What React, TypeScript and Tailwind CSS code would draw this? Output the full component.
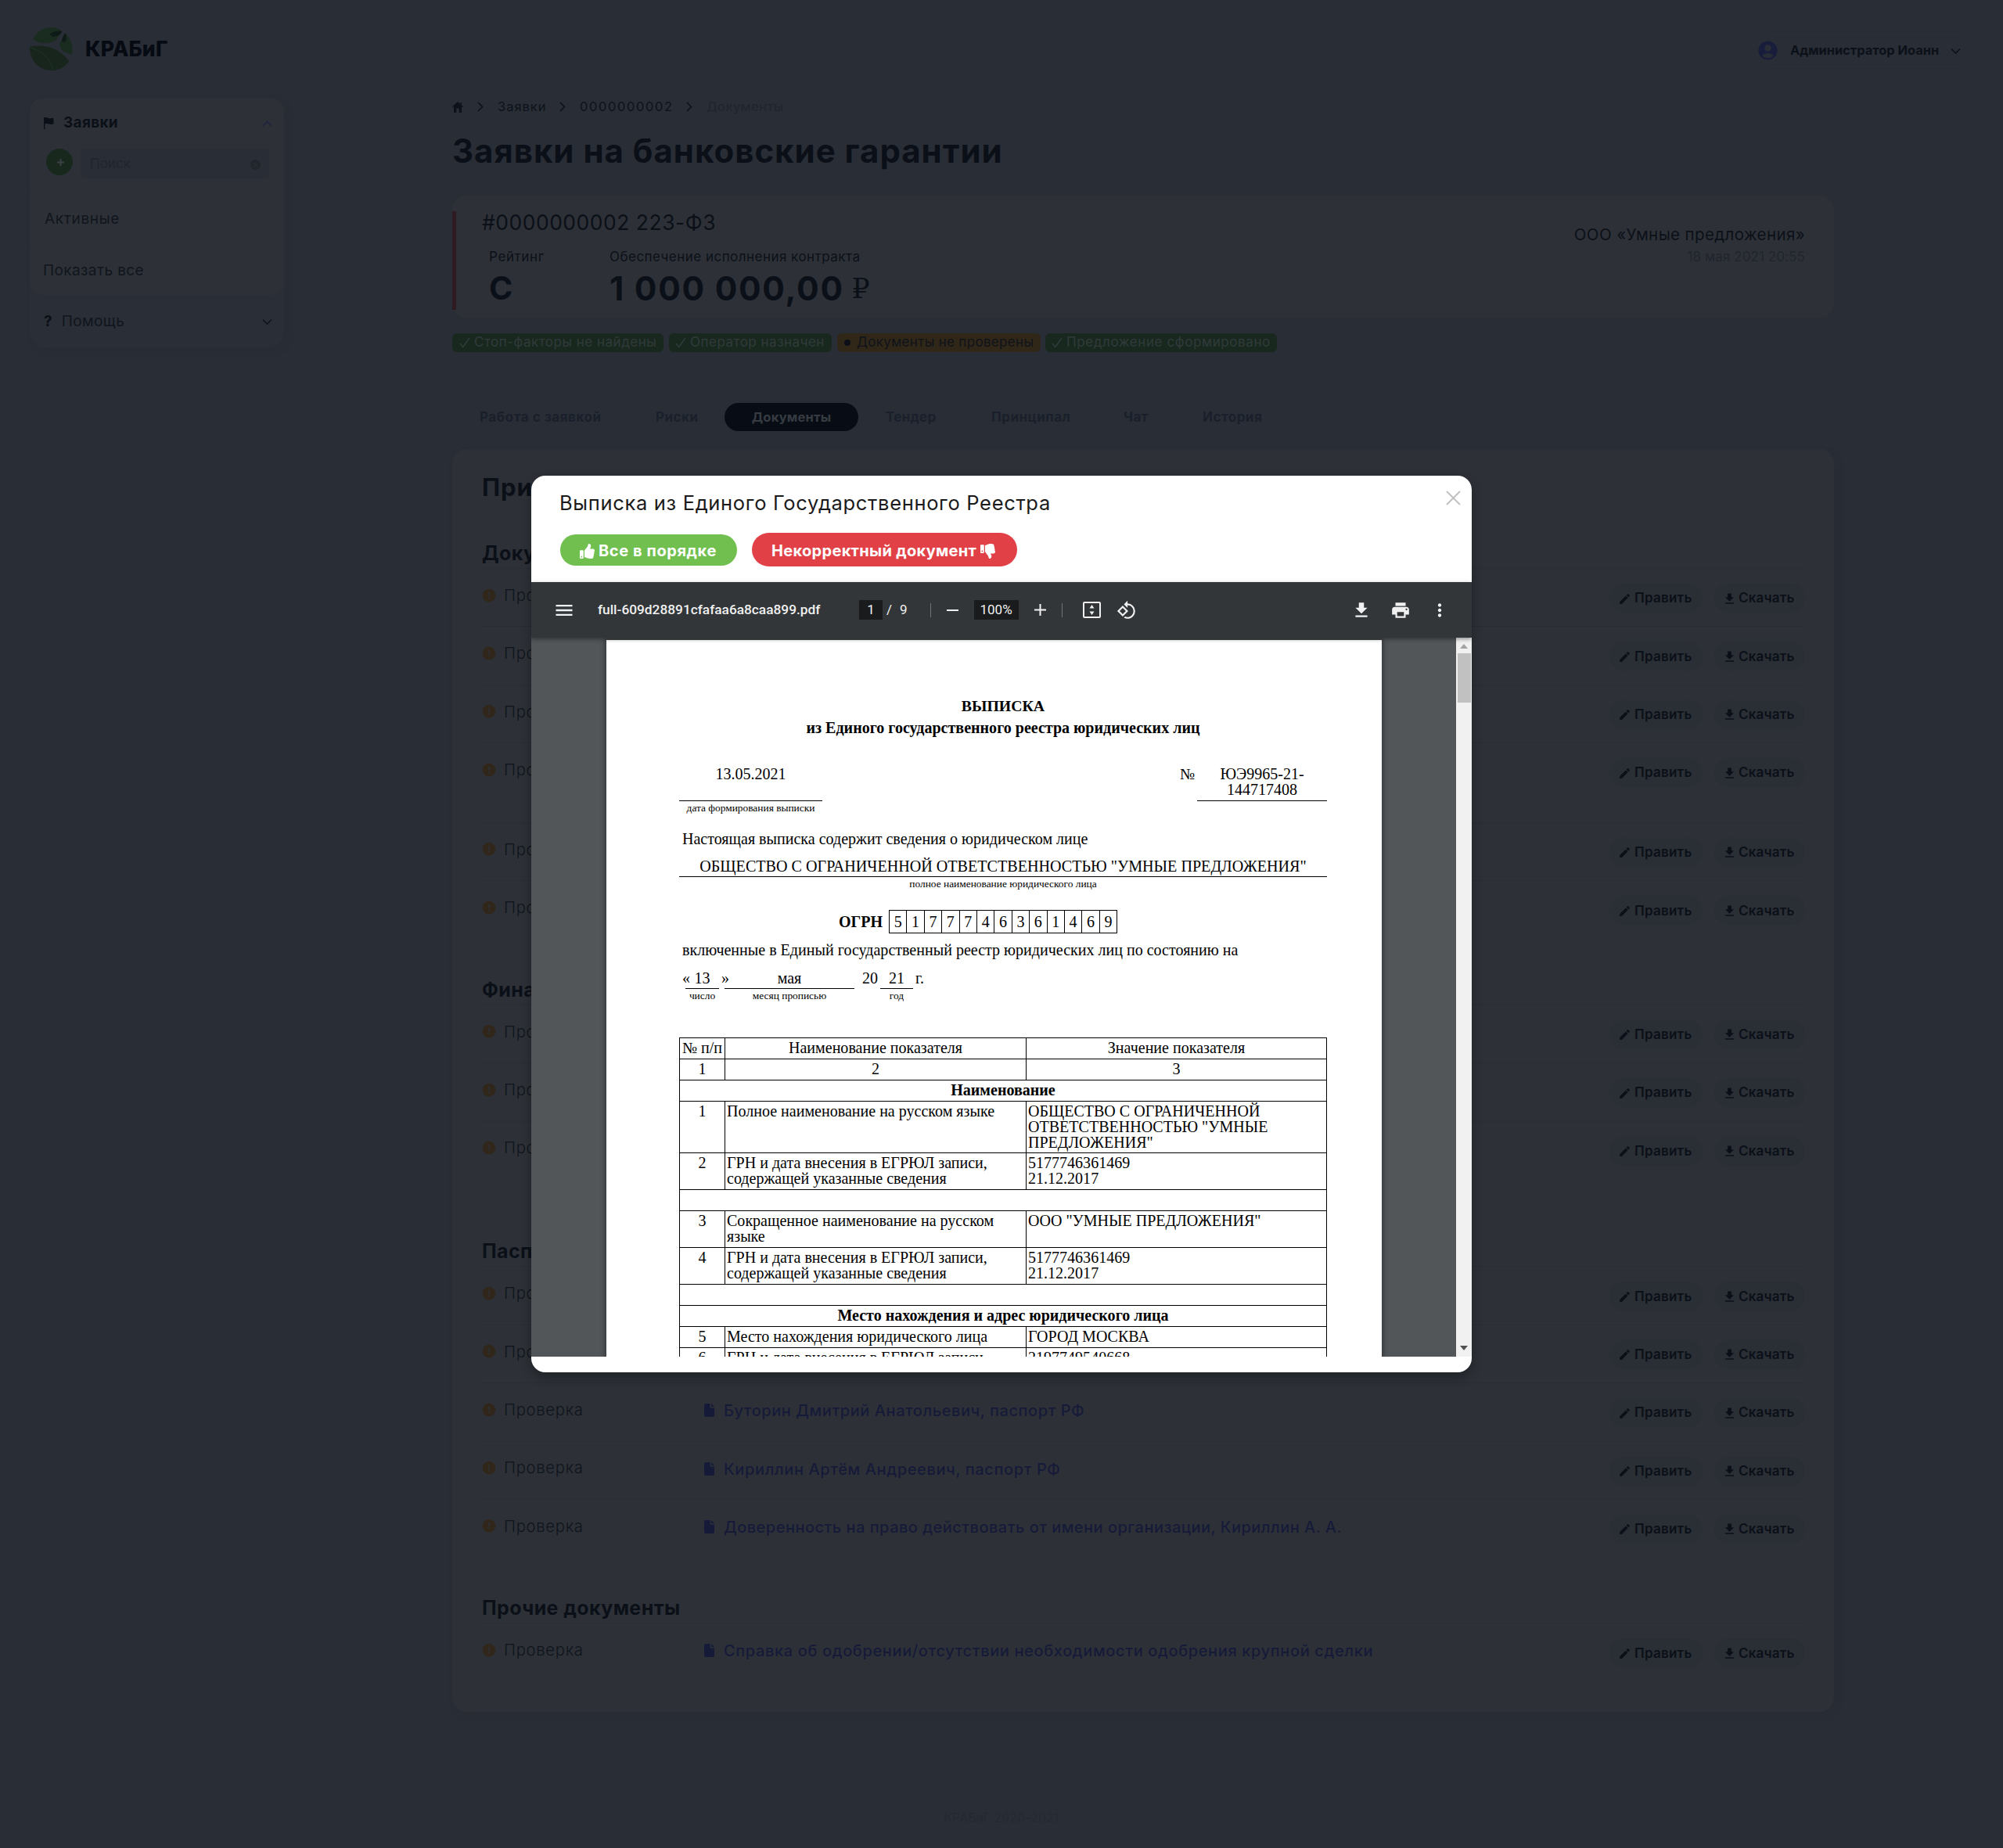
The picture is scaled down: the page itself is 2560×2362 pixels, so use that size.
import type { ReactNode } from 'react';
import { FaThumbsDown, FaThumbsUp } from 'react-icons/fa';
import {
  MdAccountCircle,
  MdError,
  MdFileDownload,
  MdMenu,
  MdModeEdit,
  MdMoreVert,
  MdPrint,
  MdRotate90DegreesCcw,
} from 'react-icons/md';

function Chevron({ dir, className = '' }: { dir: 'up' | 'down' | 'right'; className?: string }) {
  const d = { up: 'M1 8 L6.5 2.5 L12 8', down: 'M1 2.5 L6.5 8 L12 2.5', right: 'M3 1 L8.5 6.5 L3 12' }[dir];
  return (
    <svg
      viewBox={dir === 'right' ? '0 0 12 13' : '0 0 13 10'}
      className={`shrink-0 ${dir === 'right' ? 'h-[13px] w-3' : 'h-[10px] w-[13px]'} ${className}`}
      fill="none"
      stroke="currentColor"
      strokeWidth="1.6"
    >
      <path d={d} />
    </svg>
  );
}

function Logo() {
  return (
    <svg viewBox="0 0 55 55" className="h-[55px] w-[55px]">
      <path d="M4.3 15 C9 5 18 0 27.5 0 C33 0 38 2 41.4 5 L33.5 16.5 C24 22 12 21.5 4.3 15Z" fill="#1a2b20" />
      <path d="M25.5 9 C29 5 35 4.5 41.4 5 C40 9 36 11 30 12Z" fill="#0e1a17" />
      <path d="M45.4 7.3 C52 13 56 22 54.3 34.3 C46 34 36.5 28 38.5 19 C42 17 42 11 45.4 7.3Z" fill="#1a2b20" />
      <path d="M45.4 7.3 C47.5 11 47 16 45 19 L41 18 C41.5 14 43 10 45.4 7.3Z" fill="#0e1a17" />
      <path d="M0 24.5 C20 21 38 26 50.4 43.3 C45 51 37 55 28 55 C12 55 0 43 0 24.5Z" fill="#17251d" />
      <path d="M1 26 C15 30 26 39 30 54" fill="none" stroke="#21382a" strokeWidth="0.8" />
    </svg>
  );
}

function Header() {
  return (
    <header className="flex h-[125px] items-start justify-between pl-[38px] pr-[37px]">
      <div className="mt-[35px] flex h-[55px] items-center gap-[16px]">
        <Logo />
        <span className="text-[26.5px] font-extrabold tracking-[0.2px] text-[#060a12]">КРАБиГ</span>
      </div>
      <div className="mt-[44px] flex h-[42px] w-[284px] items-center rounded-full border border-[#2c3037] pb-[1px] pl-[5px] text-[#0c1119]">
        <MdAccountCircle className="h-[29px] w-[29px] text-[#191d3c]" />
        <span className="ml-[14px] text-[16.4px] font-bold">Администратор Иоанн</span>
        <Chevron dir="down" className="ml-[15px]" />
      </div>
    </header>
  );
}

function Sidebar() {
  return (
    <aside className="h-[319px] w-[325px] shrink-0 rounded-[18px] bg-[#2a2e36] text-[19px] text-[#10151d] shadow-[4px_4px_6px_#282c34]">
      <div className="h-[253px] rounded-[18px] bg-[#2d3137]">
        <div className="flex h-[65px] items-center pl-[18px] pr-[15px] font-bold text-[#0b1018]">
          <svg viewBox="0 0 13 15" className="h-[15px] w-[13px]" fill="currentColor">
            <path d="M0 0h1.4v15H0z M0 0 C3 -.3 4 .2 6 .9 C8.5 1.5 10 .8 12.5 .7V8.3 C10 9.5 7 8.5 5 8.2 C3 8 2 8.2 0 8.5Z" />
          </svg>
          <span className="ml-[12px] tracking-[0.3px]">Заявки</span>
          <Chevron dir="up" className="ml-auto text-[#1f2342]" />
        </div>
        <div className="flex h-[56px] items-start gap-[10px] pl-[21px]">
          <div className="flex h-[34px] w-[34px] items-center justify-center rounded-full bg-[#18281d] text-[#3a4147]">
            <svg viewBox="0 0 9 9" className="ml-[2px] h-[9px] w-[9px]" stroke="currentColor" strokeWidth="2">
              <path d="M4.5 0v9M0 4.5h9" />
            </svg>
          </div>
          <div className="flex h-[38px] w-[241px] items-center justify-between rounded-[5px] bg-[#292d35] pl-[12px] pr-[11px] pt-[2px] text-[17px] text-[#20252d]">
            <span>Поиск</span>
            <svg viewBox="0 0 13 13" className="h-[13px] w-[13px]">
              <circle cx="6.5" cy="6.5" r="6.5" fill="#21262d" />
              <path d="M4 4l5 5M9 4l-5 5" stroke="#2d3137" />
            </svg>
          </div>
        </div>
        <div className="flex h-[67px] items-center border-t border-[#2a2e35] pl-[19px] tracking-[0.66px]">Активные</div>
        <div className="flex h-[65px] items-center border-t border-[#2a2e35] pl-[17px] tracking-[0.39px]">Показать все</div>
      </div>
      <div className="flex h-[66px] items-center pl-[18px] pr-[15px]">
        <span className="text-[19px] font-bold text-[#0b1018]">?</span>
        <span className="ml-[12px] tracking-[0.41px]">Помощь</span>
        <Chevron dir="down" className="ml-auto" />
      </div>
    </aside>
  );
}

function Breadcrumbs() {
  return (
    <nav className="flex h-[24px] items-center pb-[1px] text-[16.5px] text-[#0d121a]">
      <svg viewBox="0 0 14 14" className="h-[14px] w-[14px]" fill="currentColor">
        <path d="M7 0 14 6.3 13.2 7.2 12 6.2V14H8.7V8.500H5.300V14H2V6.200L.8 7.200 0 6.300Z M10.500 1h1.500v3l-1.500-1.300z" />
      </svg>
      <Chevron dir="right" className="ml-[16px]" />
      <span className="ml-[16px] w-[79px] tracking-[0.97px]">Заявки</span>
      <Chevron dir="right" className="-ml-[2px]" />
      <span className="ml-[16px] w-[136px] tracking-[1.6px]">0000000002</span>
      <Chevron dir="right" className="-ml-[2px]" />
      <span className="ml-[16px] tracking-[0.55px] text-[#1f242d]">Документы</span>
    </nav>
  );
}

function RequestCard() {
  return (
    <section className="mt-[14px] flex h-[156px] rounded-[18px] bg-[#2d3137] text-[#0b1018]">
      <div className="mt-[20px] h-[126px] w-[5px] bg-[#2f1a21]" />
      <div className="flex flex-1 flex-col pl-[33px] pt-[19px]">
        <div className="flex h-[32px] items-center text-[26.5px] tracking-[0.5px]">#0000000002 223-ФЗ</div>
        <div className="mt-[16px] flex">
          <div className="w-[154px] pl-[9px]">
            <div className="flex h-[24px] items-center text-[17px] tracking-[0.61px]">Рейтинг</div>
            <div className="mt-[8px] flex h-[40px] items-center text-[41px] font-bold">С</div>
          </div>
          <div className="pl-[9px]">
            <div className="flex h-[24px] items-center text-[17px] tracking-[0.47px]">Обеспечение исполнения контракта</div>
            <div className="mt-[8px] flex h-[40px] items-center text-[42.5px]">
              <span className="font-bold tracking-[1.7px]">1 000 000,00</span>
              <span className="ml-[10px] font-['Liberation_Serif','DejaVu_Serif',serif] text-[36px]">₽</span>
            </div>
          </div>
        </div>
      </div>
      <div className="flex flex-col items-end pr-[37px] pt-[36px]">
        <div className="flex h-[28px] items-center text-[20.5px] tracking-[0.39px]">ООО «Умные предложения»</div>
        <div className="flex h-[29px] items-center text-[17px] tracking-[0.1px] text-[#20252d]">18 мая 2021 20:55</div>
      </div>
    </section>
  );
}

function Check() {
  return (
    <svg viewBox="0 0 14 14" className="mr-[5px] h-[14px] w-[14px]" fill="none" stroke="currentColor" strokeWidth="1.6">
      <path d="M1 8l3.800 4.500L13 1" />
    </svg>
  );
}

function Badges() {
  return (
    <div className="mt-[20px] flex h-[24px] text-[17px] whitespace-nowrap text-[#313a3b]">
      <div className="flex w-[270px] items-center rounded-[6px] bg-[#18281e] pl-[9px] tracking-[0.5px]">
        <Check />
        Стоп-факторы не найдены
      </div>
      <div className="ml-[7px] flex w-[208px] items-center rounded-[6px] bg-[#18281e] pl-[8px] tracking-[0.5px]">
        <Check />
        Оператор назначен
      </div>
      <div className="ml-[7px] flex w-[260px] items-center rounded-[6px] bg-[#302719] pl-[9px] tracking-[0.32px] text-[#0f1319]">
        <span className="mr-[8px] h-[8px] w-[8px] rounded-full bg-[#0b1018]" />
        Документы не проверены
      </div>
      <div className="ml-[6px] flex w-[296px] items-center rounded-[6px] bg-[#18281e] pl-[8px] tracking-[0.6px]">
        <Check />
        Предложение сформировано
      </div>
    </div>
  );
}

function Tabs() {
  return (
    <div className="mt-[65px] flex h-[36px] items-center text-[17px] font-bold whitespace-nowrap text-[#1a202b]">
      <span className="w-[260px] pl-[35px] pt-[1px] tracking-[0.56px]">Работа с заявкой</span>
      <span className="w-[88px] pt-[1px] tracking-[0.5px]">Риски</span>
      <span className="flex h-[36px] w-[171px] items-center justify-center rounded-full bg-[#080d15] pt-[1px] text-[16.6px] tracking-[0.15px] text-[#353b41]">
        Документы
      </span>
      <span className="w-[170px] pl-[35px] pt-[1px] tracking-[0.24px]">Тендер</span>
      <span className="w-[169px] pt-[1px] tracking-[0.5px]">Принципал</span>
      <span className="w-[101px] pt-[1px] tracking-[0.35px]">Чат</span>
      <span className="pt-[1px] tracking-[0.5px]">История</span>
    </div>
  );
}

type Doc = { name?: string; spacing?: string; tall?: boolean };
type Group = { title: string; docs: Doc[] };

const groups: Group[] = [
  { title: 'Документы', docs: [{}, {}, {}, { tall: true }, {}, {}] },
  { title: 'Финансовые документы', docs: [{}, {}, { tall: true }] },
  {
    title: 'Паспорта',
    docs: [
      {},
      {},
      { name: 'Буторин Дмитрий Анатольевич, паспорт РФ', spacing: 'tracking-[0.56px]' },
      { name: 'Кириллин Артём Андреевич, паспорт РФ', spacing: 'tracking-[0.62px]' },
      {
        name: 'Доверенность на право действовать от имени организации, Кириллин А. А.',
        spacing: 'tracking-[0.48px]',
      },
    ],
  },
  {
    title: 'Прочие документы',
    docs: [
      {
        name: 'Справка об одобрении/отсутствии необходимости одобрения крупной сделки',
        spacing: 'tracking-[0.63px]',
      },
    ],
  },
];

function FileIcon() {
  return (
    <svg viewBox="0 0 13 17" className="mr-[12px] h-[17px] w-[13px]" fill="#161a39">
      <path d="M2 0H7.500V5.500H13V15a2 2 0 0 1-2 2H2a2 2 0 0 1-2-2V2A2 2 0 0 1 2 0Z M9 0 13 4H9Z" />
    </svg>
  );
}

function DocRow({ doc, last }: { doc: Doc; last: boolean }) {
  return (
    <div
      className={`flex items-start border-b pt-[19px] ${doc.tall ? 'h-[101.8px]' : 'h-[74.4px]'} ${
        last ? 'border-transparent' : 'border-[#292d34]'
      }`}
    >
      <div className="flex h-[29px] w-[284px] items-center text-[20.3px] font-light tracking-[0.68px] text-[#0f141c]">
        <MdError className="-ml-[1px] mr-[9px] h-[20px] w-[20px] text-[#30271a]" />
        <span className="pt-[1px]">Проверка</span>
      </div>
      {doc.name && (
        <div className={`flex h-[31px] items-center text-[20px] font-medium text-[#161a39] ${doc.spacing}`}>
          <FileIcon />
          <span className="pt-[1px]">{doc.name}</span>
        </div>
      )}
      <div className="ml-auto flex gap-[15px] text-[17px] font-semibold text-[#0b1018]">
        <div className="flex h-[37px] w-[119px] items-center rounded-full bg-[#2a2e35] pl-[11px] pt-[1px] tracking-[0.25px]">
          <MdModeEdit className="mr-[4px] h-[17px] w-[17px]" />
          Править
        </div>
        <div className="flex h-[37px] w-[116px] items-center rounded-full bg-[#2a2e35] pl-[10px] pt-[1px] tracking-[0.2px]">
          <MdFileDownload className="mr-[2px] h-[19px] w-[19px]" />
          Скачать
        </div>
      </div>
    </div>
  );
}

function DocumentsPanel() {
  return (
    <section className="mt-[23px] h-[1614px] rounded-[18px] bg-[#2d3137] px-[38px] pr-[37px] pt-[27px] shadow-[4px_4px_6px_#282c34]">
      <h2 className="flex h-[42px] items-center pt-[2px] text-[31px] font-bold tracking-[0.9px] text-[#0b1018]">
        Принципал
      </h2>
      {groups.map((group) => (
        <div key={group.title}>
          <h3 className="flex h-[84px] items-end border-b border-[#292d34] pb-[4px] text-[25px] leading-[30px] font-bold tracking-[0.4px] text-[#0b1018]">
            {group.title}
          </h3>
          {group.docs.map((doc, i) => (
            <DocRow key={i} doc={doc} last={i === group.docs.length - 1} />
          ))}
        </div>
      ))}
    </section>
  );
}

function PdfToolbar() {
  return (
    <div className="relative z-10 flex h-[71px] items-center bg-[#323639] pl-[28px] pr-[28px] font-[Roboto,sans-serif] text-[17px] text-[#f1f1f1] shadow-[0_2px_5px_rgba(0,0,0,0.4)]">
      <MdMenu className="h-[28px] w-[28px]" />
      <span className="ml-[29px] w-[334px] text-[17.3px] font-medium">full-609d28891cfafaa6a8caa899.pdf</span>
      <span className="flex h-[25px] w-[30px] items-center justify-center bg-[#191b1c]">1</span>
      <span className="ml-[5px]">/</span>
      <span className="ml-[10px]">9</span>
      <span className="ml-[29px] h-[18px] w-px bg-[#70757a]" />
      <span className="ml-[20px] h-[2px] w-[15px] bg-[#f1f1f1]" />
      <span className="ml-[20px] flex h-[25px] w-[57px] items-center justify-center bg-[#191b1c]">100%</span>
      <svg viewBox="0 0 15 15" className="ml-[20px] h-[15px] w-[15px]" stroke="currentColor" strokeWidth="2">
        <path d="M7.500 0v15M0 7.500h15" />
      </svg>
      <span className="ml-[20px] h-[18px] w-px bg-[#70757a]" />
      <svg viewBox="0 0 23 21" className="ml-[26px] h-[21px] w-[23px]">
        <rect x="1" y="1" width="21" height="19" rx="1" fill="none" stroke="currentColor" strokeWidth="2" />
        <path d="M11.500 4 L14.500 8.500 H8.500Z M11.500 17 L14.500 12.500 H8.500Z" fill="currentColor" />
      </svg>
      <MdRotate90DegreesCcw className="ml-[20px] h-[26px] w-[26px]" />
      <MdFileDownload className="ml-auto h-[26px] w-[26px]" />
      <MdPrint className="ml-[24px] h-[26px] w-[26px]" />
      <MdMoreVert className="ml-[24px] h-[26px] w-[26px]" />
    </div>
  );
}

function Caption({ children }: { children: ReactNode }) {
  return <div className="h-[16px] text-center text-[13.4px] leading-[17px] whitespace-nowrap">{children}</div>;
}

function TableRow({
  height,
  cells,
  centered = false,
}: {
  height: string;
  cells: [ReactNode, ReactNode, ReactNode];
  centered?: boolean;
}) {
  const align = centered ? 'text-center' : 'pl-[2px]';
  return (
    <div className={`flex border-b border-black ${height}`}>
      <div className="w-[58px] border-r border-black pt-[1.5px] text-center whitespace-nowrap">{cells[0]}</div>
      <div className={`w-[385px] border-r border-black pt-[1.5px] ${align}`}>{cells[1]}</div>
      <div className={`flex-1 pt-[1.5px] ${align}`}>{cells[2]}</div>
    </div>
  );
}

function WideRow({ height, children }: { height: string; children?: ReactNode }) {
  return <div className={`border-b border-black pt-[2px] text-center font-bold ${height}`}>{children}</div>;
}

const grn: ReactNode = (
  <>
    ГРН и дата внесения в ЕГРЮЛ записи,
    <br />
    содержащей указанные сведения
  </>
);

const grnValue: ReactNode = (
  <>
    5177746361469
    <br />
    21.12.2017
  </>
);

function PdfPage() {
  return (
    <div className="ml-[96px] mt-[3px] h-[1400px] w-[991px] shrink-0 bg-white pl-[93px] pr-[70px] pt-[70px] font-['Liberation_Serif',serif] text-[20.05px] leading-[20px] text-black shadow-[0_0_6px_2px_rgba(0,0,0,0.35)]">
      <div className="text-center leading-[28px] font-bold">
        <div className="text-[19.8px]">ВЫПИСКА</div>
        <div>из Единого государственного реестра юридических лиц</div>
      </div>

      <div className="mt-[35px] flex">
        <div className="w-[183px] text-center">
          <div className="h-[45px] border-b border-black">13.05.2021</div>
          <Caption>дата формирования выписки</Caption>
        </div>
        <div className="ml-auto pr-[3px]">№</div>
        <div className="h-[45px] w-[166px] border-b border-black text-center">
          ЮЭ9965-21-
          <br />
          144717408
        </div>
      </div>

      <div className="mt-[22px] pl-[4px]">Настоящая выписка содержит сведения о юридическом лице</div>
      <div className="mt-[15px] h-[24px] border-b border-black text-center text-[20.13px] whitespace-nowrap">
        ОБЩЕСТВО С ОГРАНИЧЕННОЙ ОТВЕТСТВЕННОСТЬЮ "УМНЫЕ ПРЕДЛОЖЕНИЯ"
      </div>
      <Caption>полное наименование юридического лица</Caption>

      <div className="mt-[26px] flex h-[30px] items-center pl-[204px]">
        <span className="w-[64px] font-bold">ОГРН</span>
        <div className="flex h-[30px] border-y border-l border-black">
          {'5177746361469'.split('').map((digit, i) => (
            <span key={i} className="w-[22.4px] border-r border-black text-center leading-[28px]">
              {digit}
            </span>
          ))}
        </div>
      </div>

      <div className="mt-[11px] pl-[4px] whitespace-nowrap">
        включенные в Единый государственный реестр юридических лиц по состоянию на
      </div>

      <div className="mt-[16px] flex pl-[4px]">
        <span className="w-[4px]">«</span>
        <div className="w-[43px] text-center">
          <div className="h-[24px] border-b border-black">13</div>
          <Caption>число</Caption>
        </div>
        <span className="ml-[3px] w-[4px]">»</span>
        <div className="w-[166px] text-center">
          <div className="h-[24px] border-b border-black">мая</div>
          <Caption>месяц прописью</Caption>
        </div>
        <span className="ml-[10px] w-[23px]">20</span>
        <div className="w-[42px] text-center">
          <div className="h-[24px] border-b border-black">21</div>
          <Caption>год</Caption>
        </div>
        <span className="ml-[3px]">г.</span>
      </div>

      <div className="mt-[46px] border-x border-t border-black">
        <TableRow height="h-[27px]" centered cells={['№ п/п', 'Наименование показателя', 'Значение показателя']} />
        <TableRow height="h-[27px]" centered cells={['1', '2', '3']} />
        <WideRow height="h-[27px]">Наименование</WideRow>
        <TableRow
          height="h-[66px]"
          cells={[
            '1',
            'Полное наименование на русском языке',
            <>
              ОБЩЕСТВО С ОГРАНИЧЕННОЙ
              <br />
              ОТВЕТСТВЕННОСТЬЮ "УМНЫЕ
              <br />
              ПРЕДЛОЖЕНИЯ"
            </>,
          ]}
        />
        <TableRow height="h-[47px]" cells={['2', grn, grnValue]} />
        <WideRow height="h-[27px]" />
        <TableRow
          height="h-[47px]"
          cells={[
            '3',
            <>
              Сокращенное наименование на русском
              <br />
              языке
            </>,
            'ООО "УМНЫЕ ПРЕДЛОЖЕНИЯ"',
          ]}
        />
        <TableRow height="h-[47px]" cells={['4', grn, grnValue]} />
        <WideRow height="h-[27px]" />
        <WideRow height="h-[27px]">Место нахождения и адрес юридического лица</WideRow>
        <TableRow height="h-[27px]" cells={['5', 'Место нахождения юридического лица', 'ГОРОД МОСКВА']} />
        <TableRow height="h-[47px]" cells={['6', grn, '2197749540668']} />
      </div>
    </div>
  );
}

function Scrollbar() {
  return (
    <div className="ml-auto flex h-full w-[20px] flex-col items-center bg-[#f1f1f1]">
      <svg viewBox="0 0 10 6" className="mt-[8px] h-[6px] w-[10px] shrink-0 fill-[#a3a3a3]">
        <path d="M5 0 10 6H0Z" />
      </svg>
      <div className="mt-[6px] h-[63px] w-[17px] shrink-0 bg-[#c1c1c1]" />
      <svg viewBox="0 0 10 6" className="mb-[8px] mt-auto h-[6px] w-[10px] shrink-0 fill-[#505050]">
        <path d="M0 0H10L5 6Z" />
      </svg>
    </div>
  );
}

function Modal() {
  return (
    <div className="absolute inset-0 flex items-center justify-center">
      <div className="h-[1146px] w-[1202px] overflow-hidden rounded-[18px] bg-white shadow-[0_6px_14px_rgba(0,0,0,0.3)]">
        <div className="flex h-[69px] items-start pl-[36px] pr-[14px]">
          <h1 className="text-[25.5px] leading-[70px] tracking-[0.67px] text-[#1a1a1a]">
            Выписка из Единого Государственного Реестра
          </h1>
          <svg viewBox="0 0 19 19" className="ml-auto mt-[19px] h-[19px] w-[19px]" stroke="#bfbfbf" strokeWidth="1.8">
            <path d="M1 1l17 17M18 1L1 18" />
          </svg>
        </div>
        <div className="flex h-[67px] items-start pl-[37px] text-[20px] font-bold text-white">
          <button className="mt-[6px] flex h-[40px] w-[226px] items-center rounded-full bg-[#70bf4f] pl-[25px] pt-[2px] tracking-[0.6px]">
            <FaThumbsUp className="mr-[5px] h-[19px] w-[19px]" />
            Все в порядке
          </button>
          <button className="ml-[19px] mt-[4px] flex h-[43px] w-[339px] items-center rounded-full bg-[#e14146] pl-[25px] pt-[3px] tracking-[0.31px]">
            Некорректный документ
            <FaThumbsDown className="ml-[5px] h-[19px] w-[19px]" />
          </button>
        </div>
        <PdfToolbar />
        <div className="flex h-[919px] items-start overflow-hidden bg-[#525659]">
          <PdfPage />
          <Scrollbar />
        </div>
      </div>
    </div>
  );
}

export default function App() {
  return (
    <div className="relative h-[2362px] w-[2560px] overflow-hidden bg-[#292d35] font-[Inter,sans-serif]">
      <Header />
      <div className="flex items-start pl-[38px]">
        <Sidebar />
        <main className="ml-[215px] w-[1766px]">
          <Breadcrumbs />
          <h1 className="flex h-[87px] items-center text-[42px] font-bold tracking-[0.98px] text-[#0b1018]">
            Заявки на банковские гарантии
          </h1>
          <RequestCard />
          <Badges />
          <Tabs />
          <DocumentsPanel />
        </main>
      </div>
      <footer className="mt-[124px] flex h-[24px] items-center justify-center text-[15.5px] tracking-[0.3px] text-[#242931]">
        КРАБиГ 2020-2021
      </footer>
      <Modal />
    </div>
  );
}
